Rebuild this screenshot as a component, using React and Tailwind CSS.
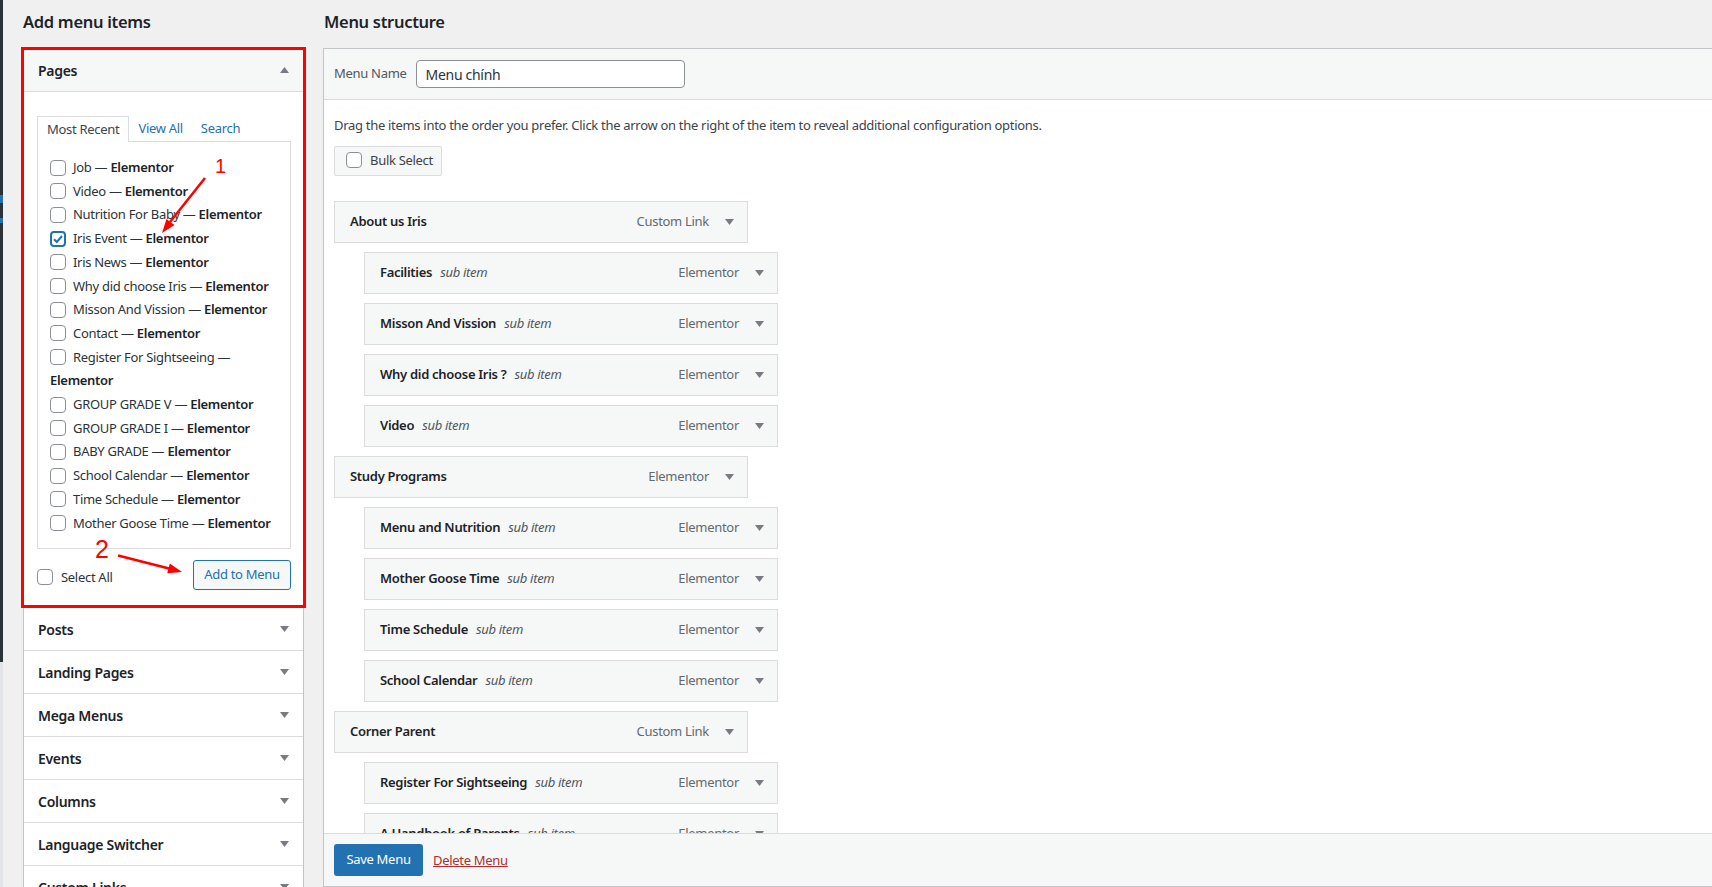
import React from "react";

const Tri = ({ up = false }) => (
  <svg width="9" height="6" viewBox="0 0 9 6" className="shrink-0">
    <path d={up ? "M0 6 L4.5 0 L9 6 Z" : "M0 0 L9 0 L4.5 6 Z"} fill="#787c82" />
  </svg>
);

const Box = ({ checked = false }) =>
  checked ? (
    <span className="inline-flex align-middle w-4 h-4 rounded-[4px] border-2 border-[#2271b1] bg-white items-center justify-center relative -top-px">
      <svg width="12" height="12" viewBox="0 0 12 12">
        <path d="M2 6.2 L4.8 9 L10 3" stroke="#2271b1" strokeWidth="2" fill="none" />
      </svg>
    </span>
  ) : (
    <span className="inline-block align-middle w-4 h-4 rounded-[4px] border border-[#8c8f94] bg-white relative -top-px" />
  );

const pages = [
  ["Job"],
  ["Video"],
  ["Nutrition For Baby"],
  ["Iris Event", true],
  ["Iris News"],
  ["Why did choose Iris"],
  ["Misson And Vission"],
  ["Contact"],
  ["Register For Sightseeing", false, true],
  ["GROUP GRADE V"],
  ["GROUP GRADE I"],
  ["BABY GRADE"],
  ["School Calendar"],
  ["Time Schedule"],
  ["Mother Goose Time"],
];

const sections = ["Posts", "Landing Pages", "Mega Menus", "Events", "Columns", "Language Switcher", "Custom Links"];

const menu = [
  ["About us Iris", 0, "Custom Link"],
  ["Facilities", 1, "Elementor"],
  ["Misson And Vission", 1, "Elementor"],
  ["Why did choose Iris ?", 1, "Elementor"],
  ["Video", 1, "Elementor"],
  ["Study Programs", 0, "Elementor"],
  ["Menu and Nutrition", 1, "Elementor"],
  ["Mother Goose Time", 1, "Elementor"],
  ["Time Schedule", 1, "Elementor"],
  ["School Calendar", 1, "Elementor"],
  ["Corner Parent", 0, "Custom Link"],
  ["Register For Sightseeing", 1, "Elementor"],
  ["A Handbook of Parents", 1, "Elementor"],
];

export default function App() {
  return (
    <div className="relative w-[1712px] h-[887px] overflow-hidden bg-[#f0f0f1] font-['Noto_Sans',sans-serif] text-[13px] tracking-[-0.3px] text-[#3c434a] flex">
      {/* admin menu edge */}
      <div className="w-[3px] shrink-0 flex flex-col">
        <div className="h-[195px] shrink-0 bg-[#2c3338]" />
        <div className="h-[8px] shrink-0 bg-[#2271b1]" />
        <div className="h-[15px] shrink-0 bg-[#2c3338]" />
        <div className="h-[5px] shrink-0 bg-[#2271b1]" />
        <div className="h-[439px] shrink-0 bg-[#2c3338]" />
        <div className="flex-1 bg-[#e2e4e7]" />
      </div>

      {/* left column */}
      <div className="ml-[20px] w-[281px] shrink-0 flex flex-col">
        <h2 className="h-[48px] shrink-0 pt-[10px] text-[16.5px] font-semibold text-[#1d2327] leading-[24px]">Add menu items</h2>
        <div className="shrink-0 border border-[#c3c4c7] bg-white">
          <div className="h-[43px] bg-[#f6f7f7] border-b border-[#dcdcde] flex items-center justify-between pl-[14px] pr-[14px]">
            <span className="text-[14px] font-semibold text-[#1d2327]">Pages</span>
            <Tri up />
          </div>
          <div className="pl-[13px] pr-[12px] pt-[24px] h-[516px] border-b border-[#dcdcde]">
            <div className="flex h-[26px] items-stretch relative z-10">
              <div className="px-[9px] border border-b-0 border-[#dcdcde] bg-white flex items-center text-[#3c434a]">Most Recent</div>
              <div className="px-[9px] flex items-center text-[#2271b1]">View All</div>
              <div className="px-[9px] flex items-center text-[#2271b1]">Search</div>
            </div>
            <div className="-mt-px border border-[#dcdcde] bg-white h-[408px] pt-[14px] pl-[12px]">
              <ul>
                {pages.map(([t, c, wrap]) => (
                  <li key={t} className="leading-[23.7px] text-[#2c3338]">
                    <Box checked={c} />
                    <span className="ml-[7px]">{t} —</span>
                    {wrap ? <br /> : " "}
                    <span className="font-semibold text-[#1d2327]">Elementor</span>
                  </li>
                ))}
              </ul>
            </div>
            <div className="mt-[11px] flex justify-between items-center">
              <label className="flex items-center gap-[8px] mt-[6px] text-[#2c3338]">
                <Box />
                <span>Select All</span>
              </label>
              <button className="w-[98px] h-[30px] rounded-[3px] border border-[#2271b1] bg-[#f6f7f7] text-[#2271b1] text-[13px] tracking-[-0.3px]">
                Add to Menu
              </button>
            </div>
          </div>
          {sections.map((s) => (
            <div key={s} className="h-[43px] border-b border-[#dcdcde] flex items-center justify-between pl-[14px] pr-[14px]">
              <span className="text-[14px] font-semibold text-[#1d2327]">{s}</span>
              <Tri />
            </div>
          ))}
        </div>
      </div>

      {/* right column */}
      <div className="ml-[19px] flex-1 flex flex-col">
        <h2 className="h-[48px] shrink-0 pt-[10px] pl-[1px] text-[16.5px] font-semibold text-[#1d2327] leading-[24px]">Menu structure</h2>
        <div className="h-[839px] shrink-0 border border-r-0 border-[#c3c4c7] bg-white flex flex-col">
          <div className="h-[51px] shrink-0 bg-[#f6f7f7] border-b border-[#dcdcde] flex items-center pl-[10px]">
            <span className="text-[#50575e]">Menu Name</span>
            <div className="ml-[9px] w-[269px] h-[28px] border border-[#8c8f94] rounded-[4px] bg-white flex items-center pl-[9px] text-[14px] text-[#2c3338]">
              Menu chính
            </div>
          </div>
          <div className="flex-1 overflow-hidden px-[10px] pt-[15px]">
            <p className="leading-[20px] text-[#3c434a]">
              Drag the items into the order you prefer. Click the arrow on the right of the item to reveal additional configuration options.
            </p>
            <div className="mt-[11px] w-[108px] h-[30px] border border-[#dcdcde] rounded-[2px] bg-[#f6f7f7] flex items-center pl-[11px] gap-[8px] text-[#3c434a]">
              <Box />
              <span>Bulk Select</span>
            </div>
            <div className="mt-[25px] flex flex-col gap-[9px]">
              {menu.map(([t, sub, type]) => (
                <div
                  key={t}
                  className={`${sub ? "ml-[30px]" : ""} w-[414px] h-[42px] shrink-0 border border-[#dcdcde] bg-[#f6f7f7] flex items-center pl-[15px] pr-[13px]`}
                >
                  <span className="font-semibold text-[#1d2327]">{t}</span>
                  {sub ? <span className="ml-[8px] italic text-[#50575e]">sub item</span> : null}
                  <span className="ml-auto mr-[16px] text-[#646970]">{type}</span>
                  <Tri />
                </div>
              ))}
            </div>
          </div>
          <div className="h-[53px] shrink-0 border-t border-[#dcdcde] bg-[#f6f7f7] flex items-start pl-[10px] pt-[10px]">
            <button className="w-[89px] h-[32px] rounded-[3px] bg-[#2271b1] text-white text-[13px] tracking-[-0.3px]">Save Menu</button>
            <a className="ml-[10px] mt-[7px] text-[#b32d2e] underline">Delete Menu</a>
          </div>
        </div>
      </div>

      {/* annotations */}
      <svg className="absolute left-0 top-0 pointer-events-none" width="1712" height="887" viewBox="0 0 1712 887">
        <rect x="22.5" y="48.5" width="282" height="558" fill="none" stroke="#ff0000" strokeWidth="3" />
        <line x1="205" y1="178" x2="170" y2="222" stroke="#ff0000" strokeWidth="2.5" />
        <polygon points="162,233 174.5,224.9 166.5,218.9" fill="#ff0000" />
        <line x1="118" y1="555.5" x2="169" y2="568.5" stroke="#ff0000" strokeWidth="2.5" />
        <polygon points="182,572 167.2,573.2 169.8,563.6" fill="#ff0000" />
        <text x="215" y="173" fill="#ff0000" fontSize="20" fontFamily="Liberation Sans, sans-serif">1</text>
        <text x="95" y="558" fill="#ff0000" fontSize="25" fontFamily="Liberation Sans, sans-serif">2</text>
      </svg>
    </div>
  );
}
